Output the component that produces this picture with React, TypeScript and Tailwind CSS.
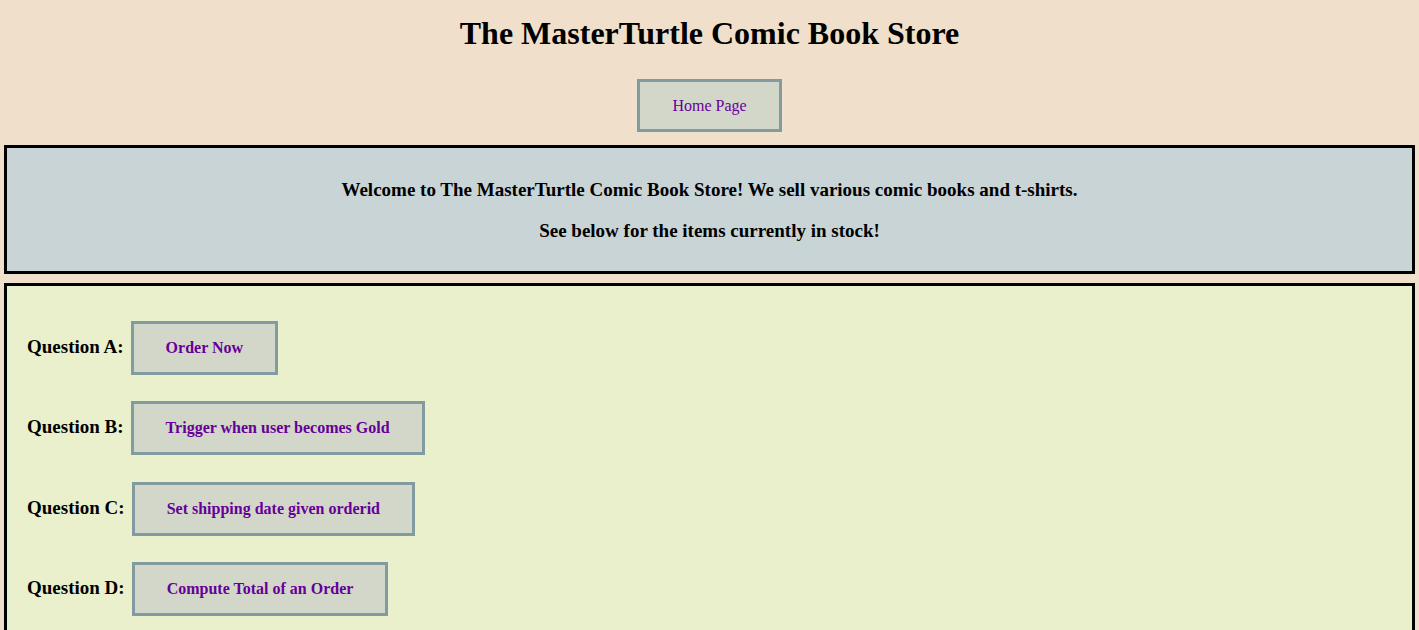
import React from "react";

const questions = [
  { label: "Question A:", action: "Order Now" },
  { label: "Question B:", action: "Trigger when user becomes Gold" },
  { label: "Question C:", action: "Set shipping date given orderid" },
  { label: "Question D:", action: "Compute Total of an Order" },
];

export default function App() {
  return (
    <div className="min-h-screen bg-[#f0dfca] px-[4px] pb-[4px] font-['Liberation_Serif',serif] text-black">
      <h1 className="pt-[15px] text-center text-[32px] font-bold leading-[37px]">
        The MasterTurtle Comic Book Store
      </h1>

      <div className="mt-[27px] flex justify-center">
        <button className="border-[3px] border-[#829ba1] bg-[#d3d7c9] px-[32px] py-[15px] text-[16px] leading-[17px] text-[#660099]">
          Home Page
        </button>
      </div>

      <div className="mt-[13px] border-[3px] border-black bg-[#c9d4d6] pt-[30.5px] pb-[29px] text-center text-[19px] font-bold leading-[22px]">
        <p>
          Welcome to The MasterTurtle Comic Book Store! We sell various comic
          books and t-shirts.
        </p>
        <p className="mt-[19px]">See below for the items currently in stock!</p>
      </div>

      <div className="mt-[9px] flex flex-col items-start gap-[26.5px] border-[3px] border-black bg-[#eaf0cb] pt-[35px] pb-[30px] pl-[20px]">
        {questions.map((q) => (
          <div key={q.label} className="flex items-baseline">
            <span className="text-[19px] font-bold leading-[22px]">{q.label}</span>
            <button className="ml-[7px] border-[3px] border-[#829ba1] bg-[#d3d7c9] px-[32px] py-[15px] text-[16px] font-bold leading-[18px] text-[#660099]">
              {q.action}
            </button>
          </div>
        ))}
      </div>
    </div>
  );
}
